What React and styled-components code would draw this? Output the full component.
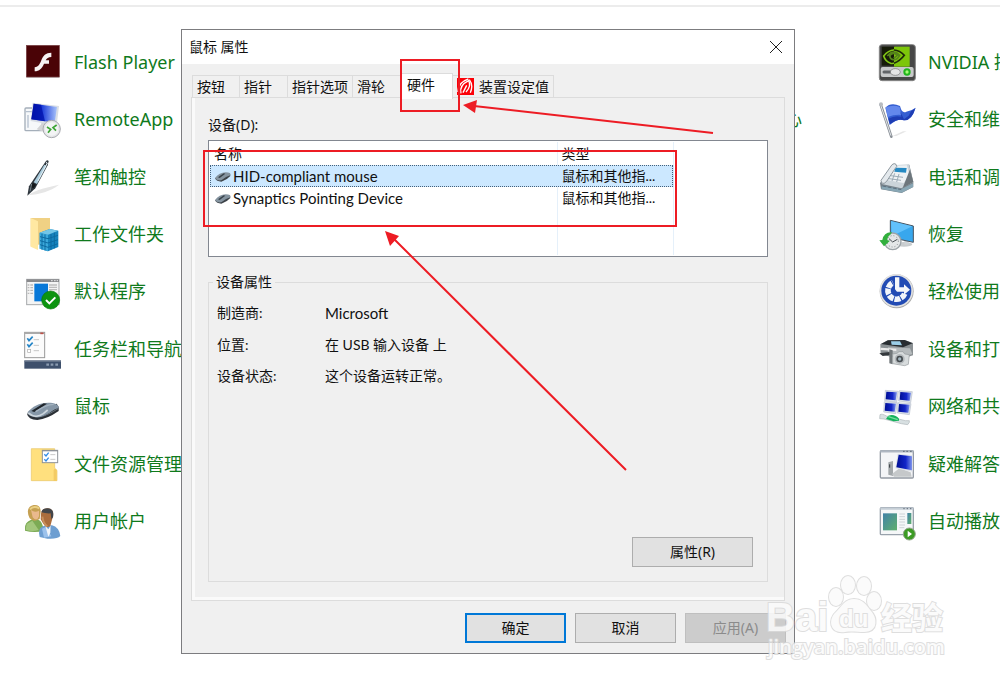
import React from 'react'
import styled, { createGlobalStyle, css } from 'styled-components'

const GlobalStyle = createGlobalStyle`
  * {
    box-sizing: border-box;
  }
  body {
    margin: 0;
    background: #fff;
  }
`

const uiFont = '"Noto Sans", "Noto Sans CJK SC", sans-serif'
const dialogFont = 'Lato, "Noto Sans CJK SC", sans-serif'

const Page = styled.div`
  position: relative;
  min-height: 100vh;
  overflow: hidden;
  padding-top: 5px;
  font-family: ${uiFont};
`

const TopRule = styled.div`
  height: 2px;
  background: #ececec;
`

const Columns = styled.main`
  display: grid;
  grid-template-columns: repeat(3, minmax(427px, 1fr));
  padding: 26px 0 0 24px;
`

const ItemList = styled.ul`
  display: grid;
  grid-template-rows: repeat(9, 1fr);
  height: 517px;
  margin: 0;
  padding: 0;
  list-style: none;
`

const Item = styled.li`
  display: flex;
  align-items: center;
`

const ItemLink = styled.a`
  display: flex;
  align-items: center;
  gap: 12px;
  color: #0f7a1c;
  font-size: 18px;
  line-height: 26px;
  text-decoration: none;
  white-space: nowrap;
`

const MiddleLink = styled(ItemLink)`
  width: 351px;
  justify-content: flex-end;
`

const ItemIcon = styled.svg`
  width: 38px;
  height: 38px;
  flex: none;
  overflow: visible;
`

const Dialog = styled.section`
  position: absolute;
  top: 29px;
  left: 181px;
  width: 614px;
  border: 1px solid #7c7c7f;
  background: #f0f0f0;
  color: #111;
  font-family: ${dialogFont};
  font-size: 14px;
  line-height: 20px;
`

const TitleBar = styled.header`
  display: flex;
  align-items: center;
  justify-content: space-between;
  height: 34px;
  padding: 0 7px;
  background: #fff;
`

const Title = styled.h1`
  margin: 0;
  font-size: 14px;
  font-weight: 400;
`

const CloseButton = styled.button`
  display: flex;
  align-items: center;
  justify-content: center;
  width: 22px;
  height: 22px;
  padding: 0;
  border: none;
  background: none;
`

const DialogBody = styled.div`
  padding: 9px 9px 0;
`

const TabList = styled.div`
  display: flex;
  align-items: flex-end;
  height: 24px;
  padding-left: 1px;
`

const Tab = styled.button`
  display: flex;
  align-items: center;
  gap: 5px;
  min-width: 48px;
  height: 22px;
  padding: 0 4px;
  border: 1px solid #dcdcdc;
  border-width: 1px 1px 0 0;
  background: #f0f0f0;
  color: #111;
  font: inherit;
  white-space: nowrap;
  &:first-child {
    border-left-width: 1px;
  }
  ${({ $active }) => $active && css`
    height: 26px;
    min-width: 52px;
    margin-bottom: -2px;
    padding: 0 6px 4px;
    background: #fff;
    z-index: 1;
  `}
`

const TabPanel = styled.div`
  padding: 17px 15px 18px;
  border: 1px solid #dcdcdc;
  box-shadow: inset 3px -3px 0 #fafafa;
`

const FieldLabel = styled.div`
  margin: 0 1px 5px;
  font-family: ${uiFont};
`

const ListBox = styled.div`
  display: flex;
  height: 117px;
  margin: 0 1px;
  padding: 1px;
  border: 1px solid #828790;
  background: #fff;
`

const DeviceTable = styled.table`
  width: 463px;
  height: 113px;
  border-collapse: collapse;
  table-layout: fixed;
`

const HeadCell = styled.th`
  width: ${({ $width }) => $width};
  height: 23px;
  padding: 0 4px;
  border-right: 1px solid #e5f0fa;
  font-weight: 400;
  text-align: left;
`

const DeviceRow = styled.tr`
  height: 22px;
  ${({ $selected }) => $selected && css`
    background: #cce8ff;
    outline: 1px dotted #44607a;
    outline-offset: -1px;
  `}
`

const DeviceCell = styled.td`
  padding: 0 4px;
  border-right: 1px solid ${({ $selected }) => ($selected ? '#cce8ff' : '#e5f0fa')};
  white-space: nowrap;
  overflow: hidden;
`

const DeviceName = styled.span`
  display: flex;
  align-items: center;
  gap: 1px;
  font-size: 15px;
`

const Group = styled.fieldset`
  display: flex;
  flex-direction: column;
  height: 310px;
  margin: 15px 1px 0;
  padding: 11px 14px 14px 8px;
  border: 1px solid #dcdcdc;
`

const GroupTitle = styled.legend`
  margin-left: -4px;
  padding: 0 3px;
`

const Details = styled.dl`
  display: grid;
  grid-template-columns: 108px 1fr;
  row-gap: 11px;
  margin: 0;
`

const DetailValue = styled.dd`
  margin: 0;
`

const Latin = styled.span`
  font-size: 15px;
`

const DialogButton = styled.button`
  width: 101px;
  height: 30px;
  padding: 0;
  border: 1px solid #adadad;
  background: #e1e1e1;
  color: #111;
  font: inherit;
  font-family: ${uiFont};
  ${({ $primary }) => $primary && css`
    border: 2px solid #0078d7;
  `}
  &:disabled {
    border-color: #bfbfbf;
    background: #ccc;
    color: #8b8b8b;
  }
`

const PropertiesButton = styled(DialogButton)`
  align-self: flex-end;
  width: 121px;
  margin-top: auto;
`

const DialogFooter = styled.footer`
  display: flex;
  justify-content: flex-end;
  gap: 9px;
  padding: 12px 8px 10px;
`

const Annotations = styled.svg`
  position: absolute;
  top: 0;
  left: 0;
  z-index: 2;
  pointer-events: none;
`

const Watermark = styled.svg`
  position: absolute;
  top: 570px;
  left: 760px;
  z-index: 3;
  pointer-events: none;
`

const FlashIcon = () => (
  <ItemIcon viewBox="0 0 114 114">
    <rect x="8" y="9" width="98" height="96" fill="#c9c9c9" />
    <rect x="7" y="7" width="99" height="95" fill="#4a0306" stroke="#7b4447" strokeWidth="2" />
    <path d="M82 29V42C73 42 68 46 65 52H75V62H60C54 77 46 84 32 85V73C44 72 48 62 52 52C57 38 65 29 82 29Z" fill="#f7f3f3" />
  </ItemIcon>
)

const RemoteAppIcon = () => (
  <ItemIcon viewBox="0 0 114 114">
    <defs>
      <linearGradient id="screen" x1="0" x2="1">
        <stop offset="0" stopColor="#0010a8" />
        <stop offset=".4" stopColor="#1839d8" />
        <stop offset="1" stopColor="#a9c4fb" />
      </linearGradient>
      <linearGradient id="navyScreen" x1="0" x2="1">
        <stop offset="0" stopColor="#000e94" />
        <stop offset=".6" stopColor="#1225c8" />
        <stop offset="1" stopColor="#7f95ec" />
      </linearGradient>
    </defs>
    <rect x="3" y="24" width="52" height="68" rx="3" fill="#f6f8fa" stroke="#a5afba" strokeWidth="4" />
    <path d="M5 35H28M12 45V83" stroke="#b6c1cf" strokeWidth="4" />
    <path d="M38 88L60 64L76 72L66 98Z" fill="#d3d4d6" />
    <path d="M26 8L105 18L98 77L20 63Z" fill="#d9dee5" />
    <path d="M29 11L99 21L92 68L22 58Z" fill="url(#screen)" />
    <path d="M29 11L51 14L63 64L22 58Z" fill="#0012aa" opacity=".75" />
    <circle cx="83" cy="87" r="26" fill="#e5e6e8" stroke="#a9abb0" strokeWidth="3" />
    <circle cx="83" cy="87" r="20" fill="#f3f4f5" />
    <path d="M69 81L80 88L72 98M98 75L87 83L96 92" fill="none" stroke="#3da535" strokeWidth="5" />
  </ItemIcon>
)

const PenIcon = () => (
  <ItemIcon viewBox="0 0 114 114">
    <path d="M12 112C38 94 70 88 105 80C78 101 48 108 12 112Z" fill="#e6e6e6" />
    <path d="M66 9Q70 4 74 9L71 22L34 91L10 113L15 85Z" fill="#2d353c" />
    <path d="M61 20L68 23L39 78L29 73Z" fill="#a9cbdc" />
    <path d="M66 12L70 15L41 70" stroke="#e8f1f5" strokeWidth="3" fill="none" />
    <path d="M27 75L36 80L29 91L19 87Z" fill="#15191c" />
    <path d="M23 78L18 100" stroke="#78868e" strokeWidth="3" />
  </ItemIcon>
)

const WorkFoldersIcon = () => (
  <ItemIcon viewBox="0 0 114 114">
    <path d="M20 9H78V94H20Z" fill="#f0d184" />
    <path d="M20 9L42 19V105L20 95Z" fill="#ffe8a2" />
    <path d="M42 89H62V106H42Z" fill="#fff" />
    <path d="M47 53L77 42L103 47V96L72 109L47 101Z" fill="#1683bd" />
    <path d="M47 53L72 59V109L47 101Z" fill="#3ba8da" />
    <path d="M47 53L77 42L103 47L72 59Z" fill="#73c6e7" />
    <path d="M48 65L72 71L102 61M48 77L72 84L102 74M48 89L72 97L102 86M54 56V103M63 58V106M81 57V104M91 53V100" fill="none" stroke="#0d6ba1" strokeWidth="3" />
  </ItemIcon>
)

const DefaultProgramsIcon = () => (
  <ItemIcon viewBox="0 0 114 114">
    <rect x="8" y="22" width="97" height="76" fill="#f4f4f4" stroke="#a6a9ab" strokeWidth="3" />
    <path d="M8 26H105" stroke="#88898c" strokeWidth="8" />
    <path d="M81 26H86M90 26H95M98 26H102" stroke="#e8e8e8" strokeWidth="3" />
    <path d="M11 39H27M11 47H27M11 55H27M11 64H27" stroke="#b9b9b9" strokeWidth="4" strokeDasharray="5 3 12" />
    <path d="M75 39H99M75 46H99M75 53H99" stroke="#bdbdbd" strokeWidth="4" />
    <rect x="31" y="35" width="41" height="53" fill="#0878d8" />
    <circle cx="80" cy="84" r="27" fill="#0c9410" stroke="#08790b" strokeWidth="2" />
    <path d="M66 84L76 94L94 76" fill="none" stroke="#fff" strokeWidth="6" />
  </ItemIcon>
)

const TaskbarIcon = () => (
  <ItemIcon viewBox="0 0 114 114">
    <rect x="2" y="7" width="60" height="76" fill="#fbfbfb" stroke="#999" strokeWidth="3" />
    <path d="M3 10H61" stroke="#aaa" strokeWidth="4" />
    <path d="M49 10H58" stroke="#bf5148" strokeWidth="5" />
    <path d="M10 25L15 32L26 20M10 43L15 50L26 38" fill="none" stroke="#2786c7" strokeWidth="5" />
    <rect x="11" y="58" width="9" height="9" fill="#fff" stroke="#aaa" strokeWidth="2" />
    <path d="M29 29H45M29 46H45M29 62H45" stroke="#c6c6c6" strokeWidth="3" />
    <rect x="1" y="92" width="110" height="24" fill="#3e506c" />
    <path d="M1 93H111" stroke="#6f7d91" strokeWidth="4" />
    <path d="M67 104H75M80 104H88M94 104H102" stroke="#8b9bb0" strokeWidth="7" />
  </ItemIcon>
)

const MouseIcon = () => (
  <ItemIcon viewBox="0 0 114 114">
    <path d="M9 80Q12 98 40 99Q70 96 104 72V60L98 50L52 62Z" fill="#2b3036" />
    <path d="M11 75C25 59 45 47 73 47C91 47 107 53 104 64C84 65 69 94 35 91C20 89 10 83 11 75Z" fill="#8697a7" />
    <path d="M13 78C28 91 44 90 58 80L71 69" fill="none" stroke="#ccd5dc" strokeWidth="5" />
    <path d="M22 72L59 49L69 50L31 75Z" fill="#20262c" />
    <path d="M35 74C52 62 68 53 89 52" fill="none" stroke="#a5b4c1" strokeWidth="4" />
    <path d="M59 87Q79 80 104 64" fill="none" stroke="#66717b" strokeWidth="3" />
  </ItemIcon>
)

const ExplorerOptionsIcon = () => (
  <ItemIcon viewBox="0 0 114 114">
    <path d="M22 11H92V70L99 76V107H22Z" fill="#ffe07e" stroke="#e8c565" strokeWidth="2" />
    <path d="M89 108V75Q93 66 98 75V108Z" fill="#f3cb64" />
    <rect x="55" y="16" width="46" height="37" fill="#fff" stroke="#8e9298" strokeWidth="3" />
    <path d="M54 17H102" stroke="#8e9298" strokeWidth="4" />
    <path d="M61 28L66 33L74 23M61 43L66 48L74 38" fill="none" stroke="#338ce5" strokeWidth="4" />
    <path d="M79 29H94M79 43H94" stroke="#c9c9c9" strokeWidth="3" />
  </ItemIcon>
)

const UsersIcon = () => (
  <ItemIcon viewBox="0 0 114 114">
    <path d="M3 80Q2 61 20 54L43 53Q56 58 60 87Q29 94 3 86Z" fill="#7cab55" />
    <path d="M8 66L25 56L44 84Q23 91 5 83Z" fill="#a2c77c" />
    <path d="M13 39Q7 13 29 9Q50 7 50 29L47 51Q28 62 17 49Z" fill="#c5a052" />
    <path d="M21 24Q32 33 45 26V43Q38 61 26 46Z" fill="#eab98d" />
    <path d="M18 22Q28 10 46 19" fill="none" stroke="#ead083" strokeWidth="6" />
    <path d="M45 93Q45 75 61 71L84 70Q105 75 109 102Q100 112 70 110L47 105Z" fill="#6d9ed1" />
    <path d="M54 80L67 74L82 103L60 107Z" fill="#9cc2ec" />
    <path d="M64 72L73 82L80 70L79 92L73 104Z" fill="#f1f5fa" />
    <path d="M51 35Q53 18 72 19Q91 21 87 43L79 72Q67 81 58 65L50 52Z" fill="#ab6d3d" />
    <path d="M52 31Q56 17 72 19Q92 21 87 46L82 52L80 34Q66 35 52 31Z" fill="#43464a" />
    <path d="M55 44Q58 66 70 73" fill="none" stroke="#c9905c" strokeWidth="6" />
  </ItemIcon>
)

const NvidiaIcon = () => (
  <ItemIcon viewBox="0 0 114 114">
    <rect x="4" y="5" width="108" height="108" rx="8" fill="#474747" stroke="#858585" strokeWidth="3" />
    <rect x="11" y="11" width="40" height="57" fill="#161b09" />
    <rect x="48" y="11" width="47" height="60" fill="#7dc60a" />
    <path d="M17 39Q46 4 79 37Q58 65 38 61Q22 55 17 39Z" fill="none" stroke="#81c516" strokeWidth="5" />
    <path d="M48 21Q65 22 79 37Q66 54 48 61" fill="none" stroke="#1d2b08" strokeWidth="5" />
    <path d="M28 39Q47 17 65 37Q57 52 45 50Q36 48 35 38Q47 25 58 37L47 46" fill="none" stroke="#55831a" strokeWidth="5" />
    <rect x="8" y="72" width="99" height="30" rx="6" fill="#c8c9ca" />
    <path d="M18 87H61" stroke="#626568" strokeWidth="9" strokeLinecap="round" />
    <ellipse cx="52" cy="87" rx="15" ry="10" fill="#e5e5e5" stroke="#777" strokeWidth="2" />
    <circle cx="87" cy="87" r="11" fill="#20b51b" />
    <circle cx="87" cy="87" r="5" fill="#a8fa75" />
  </ItemIcon>
)

const FlagIcon = () => (
  <ItemIcon viewBox="0 0 114 114">
    <path d="M42 109L75 94L86 94L55 108Z" fill="#e6e6e6" />
    <path d="M8 14L40 110" stroke="#898f96" strokeWidth="8" strokeLinecap="round" />
    <path d="M8 15L39 107" stroke="#e1e5e9" strokeWidth="3" />
    <circle cx="9" cy="13" r="6" fill="#b8bcc1" />
    <path d="M22 23Q39 5 66 18Q72 42 85 35Q103 31 113 23Q101 63 78 61Q60 54 35 75Z" fill="#345ed1" />
    <path d="M23 22Q45 13 65 21L70 45Q50 43 29 51Z" fill="#6388ec" />
    <path d="M67 35L78 58L92 47L99 34L112 25Q101 62 78 61Q60 54 36 72L31 56Q50 45 70 50Z" fill="#1e3db4" />
  </ItemIcon>
)

const PhoneIcon = () => (
  <ItemIcon viewBox="0 0 114 114">
    <path d="M6 75L50 25L94 20L106 72V87L71 105L9 94Z" fill="#77828a" />
    <path d="M42 22L93 19L105 73L70 91L11 78Z" fill="#cbd4da" />
    <path d="M48 23L87 22L94 52L77 75L30 67Z" fill="#edf1f4" />
    <path d="M52 29L86 30L84 44L49 41Z" fill="#2589c2" />
    <path d="M9 67L42 20Q49 14 54 19Q60 26 51 32L26 70Q18 80 11 75Z" fill="#e4e9ed" stroke="#8e989f" strokeWidth="3" />
    <path d="M38 53L75 58M33 62L69 67M50 46L42 69M63 48L56 72" stroke="#9cabb6" strokeWidth="3" />
    <path d="M96 34L106 72L74 90Z" fill="#6d767c" />
    <path d="M12 83L70 93L105 76V87L71 104L10 93Z" fill="#89a7b5" />
    <path d="M13 84L70 95" stroke="#5d7180" strokeWidth="3" strokeDasharray="12 4" />
  </ItemIcon>
)

const RecoveryIcon = () => (
  <ItemIcon viewBox="0 0 114 114">
    <ellipse cx="78" cy="88" rx="25" ry="7" fill="#c8ccce" />
    <path d="M79 75H92V89H79Z" fill="#cfd3d5" />
    <path d="M37 16L106 33V82L37 67Z" fill="#38a7ed" stroke="#46525e" strokeWidth="3" />
    <path d="M39 18L103 34L41 64Z" fill="#70caff" opacity=".75" />
    <circle cx="44" cy="79" r="25" fill="#e4e7e8" stroke="#9da4a8" strokeWidth="4" />
    <circle cx="44" cy="79" r="17" fill="none" stroke="#5f6569" strokeWidth="3" strokeDasharray="2 7" />
    <path d="M33 71L44 81L58 73" fill="none" stroke="#454b50" strokeWidth="3" />
    <path d="M18 94L4 76L13 75Q18 50 42 52L37 59Q28 64 28 76L36 77Z" fill="#32af3d" />
  </ItemIcon>
)

const EaseIcon = () => (
  <ItemIcon viewBox="0 0 114 114">
    <circle cx="56" cy="58" r="51" fill="#aaa" />
    <circle cx="55" cy="56" r="50" fill="#e2e2e2" />
    <circle cx="55" cy="56" r="45" fill="#224bb4" />
    <path d="M80 65A26 26 0 1 1 45 32" fill="none" stroke="#f2f5fa" strokeWidth="17" strokeDasharray="17 3" />
    <path d="M51 52V16H64V46H78V37L96 53L78 68V59H57Z" fill="#f5f7fa" />
  </ItemIcon>
)

const PrinterIcon = () => (
  <ItemIcon viewBox="0 0 114 114">
    <path d="M7 43L29 31L80 30L105 39V76L68 88L8 73Z" fill="#8b9194" />
    <path d="M9 42L30 31L80 30L104 40L75 52Z" fill="#282d31" />
    <path d="M39 34L66 34L72 46L41 44Z" fill="#9ccfe9" />
    <path d="M30 52L96 55L103 72L63 84L29 75Z" fill="#b6bbbd" />
    <path d="M8 53L55 56V63L7 60Z" fill="#ebebeb" />
    <path d="M4 70L34 66L42 74L14 78Z" fill="#34393d" />
    <path d="M34 58V100L44 103V61Z" fill="#71777a" />
    <path d="M44 72L57 70L63 65H75L80 72L94 74L91 103L80 107L44 101Z" fill="#d8dcdd" stroke="#92999c" strokeWidth="2" />
    <circle cx="65" cy="87" r="15" fill="#b4b9bc" />
    <circle cx="65" cy="87" r="10" fill="#464c50" />
    <circle cx="65" cy="87" r="5" fill="#a1b3bc" />
  </ItemIcon>
)

const NetworkIcon = () => (
  <ItemIcon viewBox="0 0 114 114">
    {[[20, 10], [62, 11], [17, 44], [58, 47]].map(([x, y]) => (
      <g key={x} transform={`translate(${x} ${y})`}>
        <path d="M2 0L41 3L36 36L0 31Z" fill="#d8dfe9" stroke="#bbc1cd" strokeWidth="2" />
        <path d="M5 4L37 6L33 30L3 27Z" fill="url(#navyScreen)" />
      </g>
    ))}
    <path d="M6 83Q12 79 25 87L82 101L94 101Q96 106 89 113L70 110L18 96L5 95Z" fill="#d8e0e2" stroke="#adb7ba" strokeWidth="2" />
    <path d="M31 86Q50 80 63 95V101L47 103L24 96Z" fill="#13b25b" />
    <path d="M31 89L59 98" stroke="#75dd9c" strokeWidth="4" />
  </ItemIcon>
)

const TroubleshootIcon = () => (
  <ItemIcon viewBox="0 0 114 114">
    <rect x="7" y="17" width="99" height="82" rx="3" fill="#f4f5f7" stroke="#949ba4" strokeWidth="4" />
    <path d="M7 19H106" stroke="#afb7c2" strokeWidth="7" />
    <path d="M75 19H80M85 19H90M96 19H101" stroke="#606a78" strokeWidth="3" />
    <path d="M31 52L45 48V93L31 89Z" fill="#a2a7aa" />
    <path d="M35 58V68" stroke="#31363b" strokeWidth="3" />
    <path d="M42 87L64 70L98 82L101 95H48Z" fill="#c5c8ca" />
    <path d="M59 26L104 31V80L52 70Z" fill="#dce0e6" />
    <path d="M62 29L102 34V76L55 67Z" fill="url(#navyScreen)" />
  </ItemIcon>
)

const AutoPlayIcon = () => (
  <ItemIcon viewBox="0 0 114 114">
    <defs>
      <linearGradient id="media" x1="0" x2="1" y1="0" y2="1">
        <stop offset="0" stopColor="#4182a7" />
        <stop offset="1" stopColor="#5fb06d" />
      </linearGradient>
    </defs>
    <rect x="7" y="17" width="99" height="81" rx="3" fill="#f5f7f8" stroke="#99a2ac" strokeWidth="4" />
    <path d="M7 20H106" stroke="#c5ced6" strokeWidth="7" />
    <path d="M76 20H80M86 20H90M96 20H100" stroke="#606a78" strokeWidth="3" />
    <rect x="15" y="34" width="42" height="51" fill="url(#media)" />
    <path d="M64 36H81M64 44H81M64 52H81M64 60H81M64 69H81M64 77H79" stroke="#ced3d7" strokeWidth="3" />
    <rect x="88" y="33" width="12" height="33" fill="url(#media)" />
    <circle cx="94" cy="96" r="18" fill="#3c9b24" stroke="#92a58b" strokeWidth="3" />
    <path d="M89 86L102 96L89 106Z" fill="#fff" />
  </ItemIcon>
)

const SmallMouse = () => (
  <svg width="18" height="14" viewBox="0 0 54 42">
    <path d="M3 28Q8 38 22 38Q39 33 49 21L48 13L30 17Z" fill="#3c4248" />
    <path d="M3 27Q16 11 35 10Q52 10 49 19Q37 22 22 34Q7 36 3 27Z" fill="#8594a0" />
    <path d="M12 25L29 13L34 14L17 27Z" fill="#38424a" />
  </svg>
)

const SynapticsIcon = () => (
  <svg width="17" height="17" viewBox="0 0 51 51">
    <path d="M0 0H51V51H0Z" fill="#fb0007" />
    <path d="M3 42Q2 14 34 3M37 5Q50 22 40 44" fill="none" stroke="#fff" strokeWidth="4" />
    <path d="M12 46Q6 22 35 8Q44 24 27 42" fill="none" stroke="#fff" strokeWidth="4" />
    <path d="M18 44L29 22" stroke="#fff" strokeWidth="4" />
  </svg>
)

const leftItems = [
  ['Flash Player', FlashIcon],
  ['RemoteApp', RemoteAppIcon],
  ['笔和触控', PenIcon],
  ['工作文件夹', WorkFoldersIcon],
  ['默认程序', DefaultProgramsIcon],
  ['任务栏和导航', TaskbarIcon],
  ['鼠标', MouseIcon],
  ['文件资源管理', ExplorerOptionsIcon],
  ['用户帐户', UsersIcon],
]

const rightItems = [
  ['NVIDIA 控', NvidiaIcon],
  ['安全和维', FlagIcon],
  ['电话和调', PhoneIcon],
  ['恢复', RecoveryIcon],
  ['轻松使用', EaseIcon],
  ['设备和打', PrinterIcon],
  ['网络和共', NetworkIcon],
  ['疑难解答', TroubleshootIcon],
  ['自动播放', AutoPlayIcon],
]

const devices = [
  { name: 'HID-compliant mouse', type: '鼠标和其他指...', selected: true },
  { name: 'Synaptics Pointing Device', type: '鼠标和其他指...' },
]

const ControlList = ({ items }) => (
  <ItemList>
    {items.map(([label, Icon]) => (
      <Item key={label}>
        <ItemLink href="#">
          <Icon />
          {label}
        </ItemLink>
      </Item>
    ))}
  </ItemList>
)

const MouseDialog = () => (
  <Dialog role="dialog" aria-labelledby="dialog-title">
    <TitleBar>
      <Title id="dialog-title">鼠标 属性</Title>
      <CloseButton type="button" aria-label="关闭">
        <svg width="12" height="12" viewBox="0 0 12 12">
          <path d="M0 0L12 12M12 0L0 12" stroke="#222" />
        </svg>
      </CloseButton>
    </TitleBar>
    <DialogBody>
      <TabList role="tablist">
        <Tab type="button" role="tab">按钮</Tab>
        <Tab type="button" role="tab">指针</Tab>
        <Tab type="button" role="tab">指针选项</Tab>
        <Tab type="button" role="tab">滑轮</Tab>
        <Tab type="button" role="tab" aria-selected="true" $active>硬件</Tab>
        <Tab type="button" role="tab">
          <SynapticsIcon />
          装置设定值
        </Tab>
      </TabList>
      <TabPanel role="tabpanel">
        <FieldLabel id="device-label">设备(D):</FieldLabel>
        <ListBox>
          <DeviceTable aria-labelledby="device-label">
            <thead>
              <tr>
                <HeadCell $width="347px">名称</HeadCell>
                <HeadCell $width="116px">类型</HeadCell>
              </tr>
            </thead>
            <tbody>
              {devices.map(({ name, type, selected }) => (
                <DeviceRow key={name} $selected={selected}>
                  <DeviceCell $selected={selected}>
                    <DeviceName>
                      <SmallMouse />
                      {name}
                    </DeviceName>
                  </DeviceCell>
                  <DeviceCell $selected={selected}>{type}</DeviceCell>
                </DeviceRow>
              ))}
              <tr>
                <DeviceCell />
                <DeviceCell />
              </tr>
            </tbody>
          </DeviceTable>
        </ListBox>
        <Group>
          <GroupTitle>设备属性</GroupTitle>
          <Details>
            <dt>制造商:</dt>
            <DetailValue><Latin>Microsoft</Latin></DetailValue>
            <dt>位置:</dt>
            <DetailValue>在 USB 输入设备 上</DetailValue>
            <dt>设备状态:</dt>
            <DetailValue>这个设备运转正常。</DetailValue>
          </Details>
          <PropertiesButton type="button">属性(R)</PropertiesButton>
        </Group>
      </TabPanel>
    </DialogBody>
    <DialogFooter>
      <DialogButton type="button" $primary>确定</DialogButton>
      <DialogButton type="button">取消</DialogButton>
      <DialogButton type="button" disabled>应用(A)</DialogButton>
    </DialogFooter>
  </Dialog>
)

const App = () => (
  <>
    <GlobalStyle />
    <Page>
      <TopRule />
      <Columns>
        <ControlList items={leftItems} />
        <ItemList>
          <Item />
          <Item>
            <MiddleLink href="#">心</MiddleLink>
          </Item>
        </ItemList>
        <ControlList items={rightItems} />
      </Columns>
      <MouseDialog />
      <Annotations width="800" height="500" viewBox="0 0 800 500" fill="none" stroke="#ed1c24" strokeWidth="2">
        <rect x="401" y="60" width="58" height="51" />
        <rect x="204" y="151" width="472" height="75" />
        <path d="M713 133L474 106M626 470L393 238" />
        <path d="M463 105L477 100L475 113ZM385 231L399 236L390 246Z" fill="#ed1c24" stroke="none" />
      </Annotations>
      <Watermark width="200" height="100" viewBox="0 0 200 100" fill="#fbfbfb" stroke="#d9d9d9" strokeWidth="2" opacity=".85" paintOrder="stroke">
        <ellipse cx="76" cy="27" rx="7" ry="9" />
        <ellipse cx="88" cy="15" rx="7" ry="9" />
        <ellipse cx="104" cy="16" rx="7" ry="9" />
        <ellipse cx="114" cy="31" rx="7" ry="9" />
        <path d="M94 29C103 29 106 35 111 41C117 47 119 62 104 62C98 62 91 61 85 62C69 64 68 49 76 42C82 36 85 29 94 29Z" />
        <text x="6" y="61" fontFamily="Liberation Sans, sans-serif" fontWeight="700" fontSize="40">Bai</text>
        <text x="79" y="57" fontFamily="Liberation Sans, sans-serif" fontWeight="700" fontSize="24">du</text>
        <text x="121" y="59" fontFamily="Noto Sans CJK SC, sans-serif" fontWeight="700" fontSize="31">经验</text>
        <text x="8" y="84" fontFamily="Open Sans, sans-serif" fontWeight="600" fontSize="20">jingyan.baidu.com</text>
      </Watermark>
    </Page>
  </>
)

export default App
